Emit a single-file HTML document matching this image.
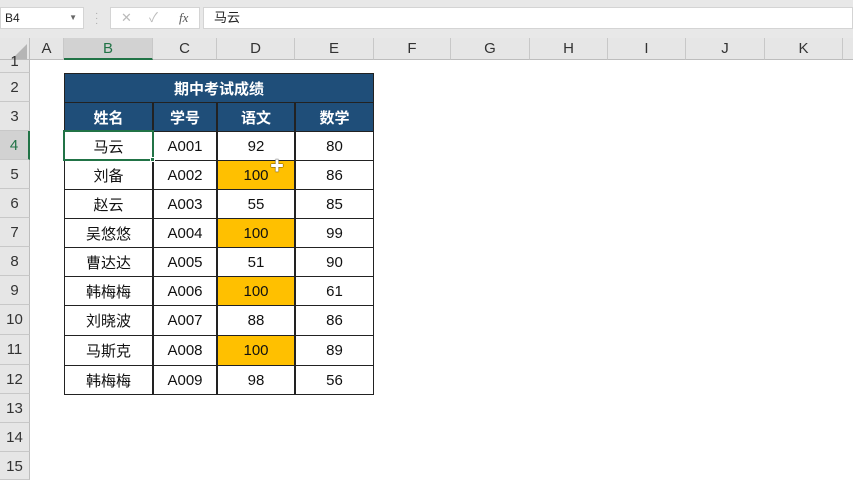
<!DOCTYPE html><html><head><meta charset="utf-8"><style>
*{margin:0;padding:0;box-sizing:border-box}
body{width:853px;height:480px;overflow:hidden;background:#fff;position:relative;font-family:"Liberation Sans","Noto Sans CJK SC",sans-serif}
.a{position:absolute}
.ch{position:absolute;top:38px;height:22px;background:#e6e6e6;border-right:1px solid #c8c8c8;border-bottom:1px solid #bdbdbd;text-align:center;font-size:15px;line-height:22px;color:#333}
.rh{position:absolute;left:0;width:30px;background:#e6e6e6;border-bottom:1px solid #c8c8c8;border-right:1px solid #bdbdbd;text-align:center;font-size:15px;color:#333}
.c{position:absolute;border:1px solid #222;text-align:center;font-size:15px;color:#111;display:flex;align-items:center;justify-content:center;margin:-1px 0 0 -1px}
.h{background:#1f4e79;color:#fff;font-weight:bold}
.y{background:#ffc000}
</style></head><body>
<div class="a" style="left:0;top:0;width:853px;height:38px;background:#e8e8e8"></div>
<div class="a" style="left:0;top:7px;width:84px;height:22px;background:#fff;border:1px solid #d4d4d4;font-size:12px;line-height:20px;padding-left:4px;color:#222">B4<span style="position:absolute;right:6px;top:0;font-size:8px;color:#666">▼</span></div>
<div class="a" style="left:95px;top:11px;font-size:10px;color:#aaa;line-height:5px">·<br>·<br>·</div>
<div class="a" style="left:110px;top:7px;width:90px;height:22px;background:#fff;border:1px solid #d4d4d4;font-size:13px;line-height:20px;color:#bbb"><span style="position:absolute;left:10px">✕</span><span style="position:absolute;left:38px">✓</span><span style="position:absolute;left:68px;color:#555;font-style:italic;font-family:'Liberation Serif',serif">fx</span></div>
<div class="a" style="left:203px;top:7px;width:650px;height:22px;background:#fff;border:1px solid #d4d4d4;font-size:13px;line-height:20px;padding-left:10px;color:#222">马云</div>
<div class="a" style="left:0;top:38px;width:30px;height:22px;background:#e6e6e6;border-right:1px solid #bdbdbd;border-bottom:1px solid #bdbdbd"></div>
<div class="a" style="left:12px;top:44px;width:0;height:0;border-left:15px solid transparent;border-bottom:15px solid #b5b5b5"></div>
<div class="ch" style="left:30px;width:34px">A</div>
<div class="ch" style="left:64px;width:89px;background:#d2d2d2;border-bottom:2px solid #217346;color:#217346">B</div>
<div class="ch" style="left:153px;width:64px">C</div>
<div class="ch" style="left:217px;width:78px">D</div>
<div class="ch" style="left:295px;width:79px">E</div>
<div class="ch" style="left:374px;width:77px">F</div>
<div class="ch" style="left:451px;width:79px">G</div>
<div class="ch" style="left:530px;width:78px">H</div>
<div class="ch" style="left:608px;width:78px">I</div>
<div class="ch" style="left:686px;width:79px">J</div>
<div class="ch" style="left:765px;width:78px">K</div>
<div class="ch" style="left:843px;width:10px;border-right:0"></div>
<div class="rh" style="top:60px;height:13px;line-height:4px">1</div>
<div class="rh" style="top:73px;height:29px;line-height:29px">2</div>
<div class="rh" style="top:102px;height:29px;line-height:29px">3</div>
<div class="rh" style="top:131px;height:29px;line-height:29px;background:#d2d2d2;border-right:2px solid #217346;color:#217346">4</div>
<div class="rh" style="top:160px;height:29px;line-height:29px">5</div>
<div class="rh" style="top:189px;height:29px;line-height:29px">6</div>
<div class="rh" style="top:218px;height:29px;line-height:29px">7</div>
<div class="rh" style="top:247px;height:29px;line-height:29px">8</div>
<div class="rh" style="top:276px;height:29px;line-height:29px">9</div>
<div class="rh" style="top:305px;height:30px;line-height:30px">10</div>
<div class="rh" style="top:335px;height:30px;line-height:30px">11</div>
<div class="rh" style="top:365px;height:29px;line-height:29px">12</div>
<div class="rh" style="top:394px;height:29px;line-height:29px">13</div>
<div class="rh" style="top:423px;height:29px;line-height:29px">14</div>
<div class="rh" style="top:452px;height:28px;line-height:29px">15</div>

<div class="c h" style="left:65px;top:74px;width:310px;height:30px">期中考试成绩</div>
<div class="c h" style="left:65px;top:103px;width:89px;height:30px">姓名</div>
<div class="c h" style="left:154px;top:103px;width:64px;height:30px">学号</div>
<div class="c h" style="left:218px;top:103px;width:78px;height:30px">语文</div>
<div class="c h" style="left:296px;top:103px;width:79px;height:30px">数学</div>

<div class="c" style="left:65px;top:132px;width:89px;height:30px">马云</div><div class="c" style="left:154px;top:132px;width:64px;height:30px">A001</div><div class="c" style="left:218px;top:132px;width:78px;height:30px">92</div><div class="c" style="left:296px;top:132px;width:79px;height:30px">80</div>
<div class="c" style="left:65px;top:161px;width:89px;height:30px">刘备</div><div class="c" style="left:154px;top:161px;width:64px;height:30px">A002</div><div class="c y" style="left:218px;top:161px;width:78px;height:30px">100</div><div class="c" style="left:296px;top:161px;width:79px;height:30px">86</div>
<div class="c" style="left:65px;top:190px;width:89px;height:30px">赵云</div><div class="c" style="left:154px;top:190px;width:64px;height:30px">A003</div><div class="c" style="left:218px;top:190px;width:78px;height:30px">55</div><div class="c" style="left:296px;top:190px;width:79px;height:30px">85</div>
<div class="c" style="left:65px;top:219px;width:89px;height:30px">吴悠悠</div><div class="c" style="left:154px;top:219px;width:64px;height:30px">A004</div><div class="c y" style="left:218px;top:219px;width:78px;height:30px">100</div><div class="c" style="left:296px;top:219px;width:79px;height:30px">99</div>
<div class="c" style="left:65px;top:248px;width:89px;height:30px">曹达达</div><div class="c" style="left:154px;top:248px;width:64px;height:30px">A005</div><div class="c" style="left:218px;top:248px;width:78px;height:30px">51</div><div class="c" style="left:296px;top:248px;width:79px;height:30px">90</div>
<div class="c" style="left:65px;top:277px;width:89px;height:30px">韩梅梅</div><div class="c" style="left:154px;top:277px;width:64px;height:30px">A006</div><div class="c y" style="left:218px;top:277px;width:78px;height:30px">100</div><div class="c" style="left:296px;top:277px;width:79px;height:30px">61</div>
<div class="c" style="left:65px;top:306px;width:89px;height:31px">刘晓波</div><div class="c" style="left:154px;top:306px;width:64px;height:31px">A007</div><div class="c" style="left:218px;top:306px;width:78px;height:31px">88</div><div class="c" style="left:296px;top:306px;width:79px;height:31px">86</div>
<div class="c" style="left:65px;top:336px;width:89px;height:31px">马斯克</div><div class="c" style="left:154px;top:336px;width:64px;height:31px">A008</div><div class="c y" style="left:218px;top:336px;width:78px;height:31px">100</div><div class="c" style="left:296px;top:336px;width:79px;height:31px">89</div>
<div class="c" style="left:65px;top:366px;width:89px;height:30px">韩梅梅</div><div class="c" style="left:154px;top:366px;width:64px;height:30px">A009</div><div class="c" style="left:218px;top:366px;width:78px;height:30px">98</div><div class="c" style="left:296px;top:366px;width:79px;height:30px">56</div>

<div class="a" style="left:63px;top:130px;width:91px;height:31px;border:2px solid #217346"></div>
<div class="a" style="left:150px;top:157px;width:5px;height:5px;background:#217346;border:1px solid #fff"></div>
<div class="a" style="left:270px;top:156px;font-size:14px;color:#fff;text-shadow:0 0 1px #000,0 0 1px #000">✚</div>
</body></html>
